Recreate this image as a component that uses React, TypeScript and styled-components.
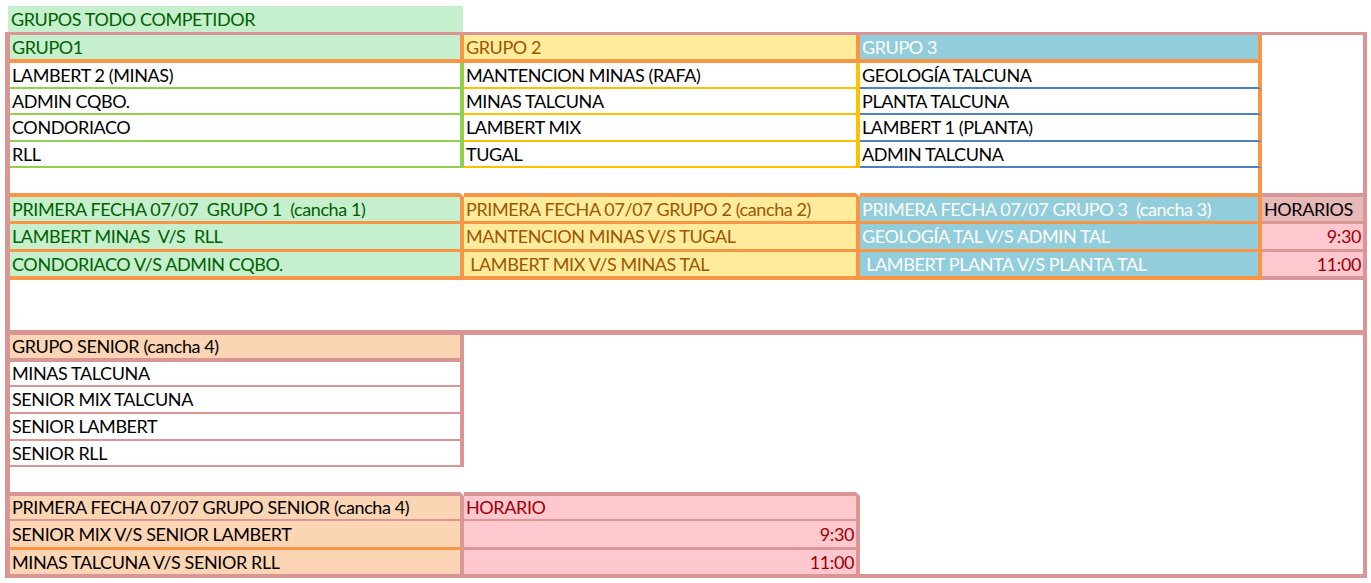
import React from 'react';
import styled, { createGlobalStyle } from 'styled-components';

// Excel-ish palette
const pink = '#DA9694';
const orange = '#F79646';
const green = '#92D050';
const yellow = '#FFC000';
const blue = '#4F81BD';

const good = { bg: '#C6EFCE', fg: '#006100' };
const neutral = { bg: '#FFEB9C', fg: '#9C5700' };
const aqua = { bg: '#92CDDC', fg: '#FFFFFF' };
const bad = { bg: '#FFC7CE', fg: '#9C0006' };
const rose = { bg: '#E6B8B7', fg: '#000000' };
const peach = { bg: '#FCD5B4', fg: '#000000' };
const plain = { bg: '#FFFFFF', fg: '#000000' };

// column widths incl. right border
const COLS = [454, 396, 402, 101];

type CellSpec = {
  text?: string;
  tone?: { bg: string; fg: string };
  right?: string;
  bottom?: string;
  align?: 'left' | 'right';
  span?: number;
};

type RowSpec = { h: number; bw: number; cells: CellSpec[] };

const GlobalStyle = createGlobalStyle`
  body {
    margin: 0;
    background: #ffffff;
    font-family: Lato, "Open Sans", sans-serif;
  }
`;

const Page = styled.div`
  padding-top: 6px;
  width: 1371px;
`;

const Title = styled.div`
  margin-left: 8px;
  width: 455px;
  height: 26px;
  line-height: 26px;
  padding-left: 3px;
  box-sizing: border-box;
  background: ${good.bg};
  color: ${good.fg};
  font-size: 18px;
  letter-spacing: -0.4px;
  white-space: pre;
`;

const Sheet = styled.div`
  margin-left: 5px;
  width: 1362px;
  box-sizing: border-box;
  border-left: 5px solid ${pink};
  border-right: 4px solid ${pink};
  border-top: 3px solid ${pink};
  border-bottom: 4px solid ${pink};
  display: flex;
  flex-direction: column;
`;

const Row = styled.div`
  display: flex;
`;

const Cell = styled.div<{
  $w: number;
  $h: number;
  $bw: number;
  $rw: number;
  $bg: string;
  $fg: string;
  $r: string;
  $b: string;
  $align: string;
}>`
  box-sizing: border-box;
  flex: none;
  width: ${p => p.$w}px;
  height: ${p => p.$h + p.$bw}px;
  line-height: ${p => p.$h}px;
  padding: 0 2px;
  background: ${p => p.$bg};
  color: ${p => p.$fg};
  border-right: ${p => p.$rw}px solid ${p => p.$r};
  border-bottom: ${p => p.$bw}px solid ${p => p.$b};
  text-align: ${p => p.$align};
  font-size: 18px;
  letter-spacing: -0.4px;
  white-space: pre;
  overflow: hidden;
`;

const groupBody = (a: string, b: string, c: string): CellSpec[] => [
  { text: a, right: green, bottom: green },
  { text: b, right: yellow, bottom: yellow },
  { text: c, right: orange, bottom: blue },
  {},
];

const seniorBody = (t: string): CellSpec[] => [
  { text: t, right: pink, bottom: pink },
  { span: 3 },
];

const rows: RowSpec[] = [
  {
    h: 24, bw: 4, cells: [
      { text: 'GRUPO1', tone: good, right: orange, bottom: orange },
      { text: 'GRUPO 2', tone: neutral, right: orange, bottom: orange },
      { text: 'GRUPO 3', tone: aqua, right: orange, bottom: orange },
      {},
    ],
  },
  { h: 24, bw: 2, cells: groupBody('LAMBERT 2 (MINAS)', 'MANTENCION MINAS (RAFA)', 'GEOLOGÍA TALCUNA') },
  { h: 24, bw: 2, cells: groupBody('ADMIN CQBO.', 'MINAS TALCUNA', 'PLANTA TALCUNA') },
  { h: 25, bw: 2, cells: groupBody('CONDORIACO', 'LAMBERT MIX', 'LAMBERT 1 (PLANTA)') },
  { h: 24, bw: 2, cells: groupBody('RLL', 'TUGAL', 'ADMIN TALCUNA') },
  {
    h: 25, bw: 4, cells: [
      { bottom: orange },
      { bottom: orange },
      { right: orange, bottom: orange },
      { bottom: pink },
    ],
  },
  {
    h: 24, bw: 3, cells: [
      { text: 'PRIMERA FECHA 07/07  GRUPO 1  (cancha 1)', tone: good, right: orange, bottom: orange },
      { text: 'PRIMERA FECHA 07/07 GRUPO 2 (cancha 2)', tone: neutral, right: orange, bottom: orange },
      { text: 'PRIMERA FECHA 07/07 GRUPO 3  (cancha 3)', tone: aqua, right: orange, bottom: orange },
      { text: 'HORARIOS', tone: rose, bottom: pink },
    ],
  },
  {
    h: 25, bw: 3, cells: [
      { text: 'LAMBERT MINAS  V/S  RLL', tone: good, right: orange, bottom: orange },
      { text: 'MANTENCION MINAS V/S TUGAL', tone: neutral, right: orange, bottom: orange },
      { text: 'GEOLOGÍA TAL V/S ADMIN TAL', tone: aqua, right: orange, bottom: orange },
      { text: '9:30', tone: bad, bottom: pink, align: 'right' },
    ],
  },
  {
    h: 24, bw: 4, cells: [
      { text: 'CONDORIACO V/S ADMIN CQBO.', tone: good, right: orange, bottom: orange },
      { text: ' LAMBERT MIX V/S MINAS TAL', tone: neutral, right: orange, bottom: orange },
      { text: ' LAMBERT PLANTA V/S PLANTA TAL', tone: aqua, right: orange, bottom: orange },
      { text: '11:00', tone: bad, bottom: pink, align: 'right' },
    ],
  },
  { h: 50, bw: 5, cells: [{ span: 4, bottom: pink }] },
  {
    h: 23, bw: 4, cells: [
      { text: 'GRUPO SENIOR (cancha 4)', tone: peach, right: pink, bottom: pink },
      { span: 3 },
    ],
  },
  { h: 23, bw: 2, cells: seniorBody('MINAS TALCUNA') },
  { h: 25, bw: 2, cells: seniorBody('SENIOR MIX TALCUNA') },
  { h: 25, bw: 2, cells: seniorBody('SENIOR LAMBERT') },
  { h: 24, bw: 2, cells: seniorBody('SENIOR RLL') },
  { h: 25, bw: 4, cells: [{ bottom: pink }, { bottom: pink }, { span: 2 }] },
  {
    h: 23, bw: 2, cells: [
      { text: 'PRIMERA FECHA 07/07 GRUPO SENIOR (cancha 4)', tone: peach, right: pink, bottom: pink },
      { text: 'HORARIO', tone: bad, right: pink, bottom: pink },
      { span: 2 },
    ],
  },
  {
    h: 26, bw: 3, cells: [
      { text: 'SENIOR MIX V/S SENIOR LAMBERT', tone: peach, right: pink, bottom: orange },
      { text: '9:30', tone: bad, right: pink, bottom: pink, align: 'right' },
      { span: 2 },
    ],
  },
  {
    h: 24, bw: 0, cells: [
      { text: 'MINAS TALCUNA V/S SENIOR RLL', tone: peach, right: pink },
      { text: '11:00', tone: bad, right: pink, align: 'right' },
      { span: 2 },
    ],
  },
];

const SheetRow: React.FC<{ row: RowSpec }> = ({ row }) => {
  let col = 0;
  return (
    <Row>
      {row.cells.map((c, i) => {
        const span = c.span ?? 1;
        const start = col;
        col += span;
        const w = COLS.slice(start, start + span).reduce((s, v) => s + v, 0);
        const last = start + span === COLS.length;
        const tone = c.tone ?? plain;
        return (
          <Cell
            key={i}
            $w={w}
            $h={row.h}
            $bw={row.bw}
            $rw={last ? 0 : 4}
            $bg={tone.bg}
            $fg={tone.fg}
            $r={c.right ?? 'transparent'}
            $b={c.bottom ?? 'transparent'}
            $align={c.align ?? 'left'}
          >
            {c.text}
          </Cell>
        );
      })}
    </Row>
  );
};

export default function App() {
  return (
    <>
      <GlobalStyle />
      <Page>
        <Title>GRUPOS TODO COMPETIDOR</Title>
        <Sheet>
          {rows.map((r, i) => (
            <SheetRow key={i} row={r} />
          ))}
        </Sheet>
      </Page>
    </>
  );
}
